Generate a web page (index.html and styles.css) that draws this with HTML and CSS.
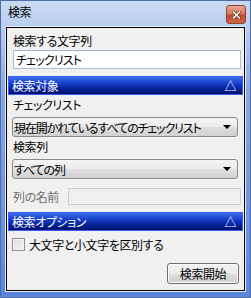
FILE: index.html
```html
<!DOCTYPE html>
<html lang="ja">
<head>
  <meta charset="UTF-8">
  <meta name="viewport" content="width=device-width, initial-scale=1.0">
  <title>検索</title>
  <link rel="stylesheet" href="styles.css">
</head>
<body>
  <div class="window">
    <div class="titlebar">
      <span class="title">検索</span>
      <span class="close-btn">
        <svg width="9" height="8" viewBox="0 0 9 8">
          <path d="M1.5 1 L7.5 7 M7.5 1 L1.5 7" stroke="#5a2a20" stroke-width="3" stroke-linecap="square"/>
          <path d="M1.5 1 L7.5 7 M7.5 1 L1.5 7" stroke="#fff" stroke-width="1.6" stroke-linecap="square"/>
        </svg>
      </span>
    </div>

    <div class="client">
      <div class="label first">検索する文字列</div>
      <div class="textbox">チェックリスト</div>

      <!-- 検索対象 -->
      <div class="section-head first-head"><span>検索対象</span><span class="toggle">△</span></div>

      <div class="label">チェックリスト</div>
      <div class="combo"><span>現在開かれているすべてのチェックリスト</span><span class="arrow"></span></div>

      <div class="label">検索列</div>
      <div class="combo"><span>すべての列</span><span class="arrow"></span></div>

      <div class="name-row">
        <span class="label disabled">列の名前</span>
        <div class="textbox off"></div>
      </div>

      <!-- 検索オプション -->
      <div class="section-head"><span>検索オプション</span><span class="toggle">△</span></div>

      <div class="check-row">
        <span class="checkbox"></span>
        <span>大文字と小文字を区別する</span>
      </div>

      <div class="actions">
        <button class="btn">検索開始</button>
      </div>
    </div>
  </div>
</body>
</html>
```

FILE: styles.css
```css
body {
  margin: 0;
  font-family: "Noto Sans CJK JP", "Noto Sans", sans-serif;
  font-size: 12px;
  font-feature-settings: "palt";
  letter-spacing: -0.4px;
  color: #000;
}
.window {
  width: 251px;
  height: 298px;
  box-sizing: border-box;
  padding: 0 6px 7px;
  display: flex;
  flex-direction: column;
  background: linear-gradient(to bottom, #cbdaf2 0, #b9cdee 27px, #88a8e6 90px, #5b86dc 100%);
  box-shadow: inset 0 0 0 1px #4e6fa8;
}
.titlebar {
  height: 27px;
  display: flex;
  align-items: flex-start;
  justify-content: space-between;
}
.title {
  margin: 4px 0 0 2px;
  line-height: 16px;
  font-size: 12px;
}
.close-btn {
  width: 20px;
  height: 19px;
  margin: 5px -1px 0 0;
  box-sizing: border-box;
  border: 1px solid #8d4434;
  border-radius: 3px;
  background: linear-gradient(to bottom, #e9a996 0, #d7775d 45%, #c24a2c 55%, #d0654a 100%);
  display: flex;
  align-items: center;
  justify-content: center;
}
.close-btn svg { display: block; }
.client {
  flex: 1;
  background: #f0f0f0;
  border: 1px solid #000;
  box-shadow: 0 0 0 1px #e4ecf8;
  padding: 5px 1px 0;
  display: flex;
  flex-direction: column;
}
.label {
  height: 16px;
  line-height: 16px;
  margin: 2px 0 0 5px;
  white-space: nowrap;
}
.label.first { margin-top: 0; }
.label.disabled { color: #6d6d6d; margin: 0; width: 55px; }
.textbox {
  height: 19px;
  box-sizing: border-box;
  margin: 1px 2px 0 5px;
  padding: 0 2px;
  line-height: 17px;
  background: #fff;
  border: 1px solid #a9c0d8;
  border-top-color: #9fb3cc;
  letter-spacing: -0.8px;
}
.textbox.off {
  flex: 1;
  height: 17px;
  margin: 0;
  background: #f0f0f0;
  border-color: #c9cfd6;
}
.section-head {
  height: 19px;
  box-sizing: border-box;
  margin-top: 7px;
  padding: 0 6px 0 3px;
  display: flex;
  justify-content: space-between;
  align-items: center;
  color: #fff;
  border: 1px solid #3a5cff;
  background: linear-gradient(to bottom, #3f6ff0 0, #1c48d2 30%, #0a2aa8 60%, #00106a 100%);
  line-height: 16px;
}
.toggle { font-size: 12px; }
.combo {
  height: 20px;
  box-sizing: border-box;
  margin: 4px 5px 0 4px;
  padding: 0 6px 0 1px;
  display: flex;
  justify-content: space-between;
  align-items: center;
  border: 1px solid #8a8a8a;
  border-radius: 3px;
  background: linear-gradient(to bottom, #f4f4f4 0, #ececec 50%, #dedede 51%, #d2d2d2 100%);
  white-space: nowrap;
  letter-spacing: -1.1px;
}
.arrow {
  width: 0;
  height: 0;
  border-left: 4px solid transparent;
  border-right: 4px solid transparent;
  border-top: 4px solid #000;
}
.name-row {
  display: flex;
  align-items: center;
  margin: 9px 2px 0 5px;
}
.check-row {
  display: flex;
  align-items: center;
  gap: 4px;
  margin: 7px 0 0 4px;
  height: 13px;
  line-height: 16px;
}
.checkbox {
  width: 13px;
  height: 13px;
  box-sizing: border-box;
  border: 1px solid #8f8f8f;
  background: linear-gradient(135deg, #dcdcdc 0, #f6f6f6 100%);
  box-shadow: inset 0 0 0 1px #f4f4f4;
}
.actions {
  display: flex;
  justify-content: flex-end;
  margin: 12px 4px 0 0;
}
.btn {
  width: 72px;
  height: 21px;
  padding: 0;
  font: inherit;
  letter-spacing: inherit;
  color: #000;
  border: 1px solid #707070;
  border-radius: 3px;
  background: linear-gradient(to bottom, #f2f2f2 0, #ebebeb 50%, #dddddd 51%, #cfcfcf 100%);
  box-shadow: inset 0 0 0 1px #fcfcfc;
}
```
